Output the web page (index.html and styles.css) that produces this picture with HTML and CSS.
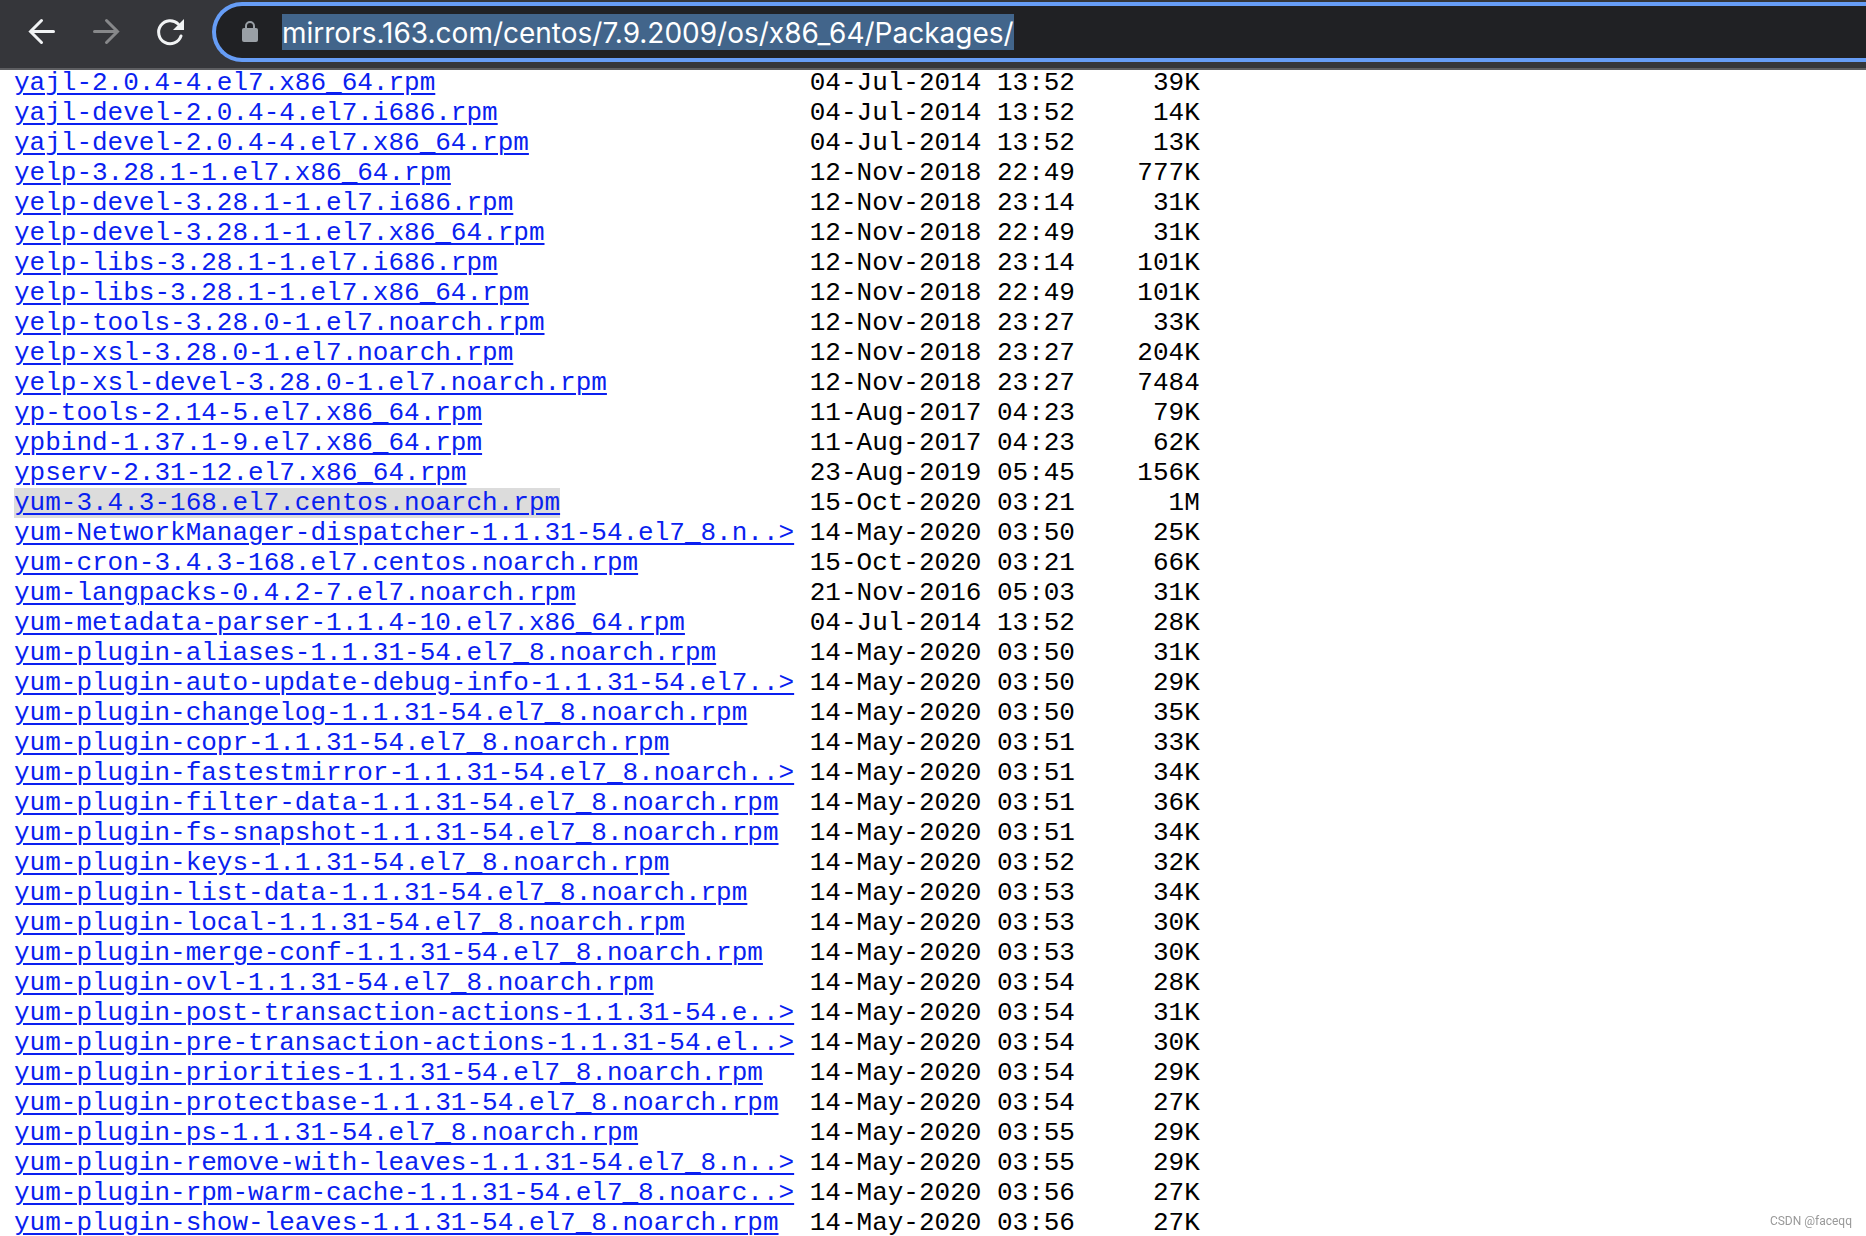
FILE: index.html
```html
<!DOCTYPE html>
<html lang="en">
<head>
<meta charset="utf-8">
<title>Index of /centos/7.9.2009/os/x86_64/Packages/</title>
<link rel="stylesheet" href="styles.css">
</head>
<body>
<header class="toolbar">
  <nav class="nav" aria-label="Browser navigation">
    <button class="nav-button" type="button" aria-label="Back">
      <svg class="icon" viewBox="0 0 32 32"><path d="M27.5 15.5H4.5M15.5 4.5L4.5 15.5L15.5 26.5"/></svg>
    </button>
    <button class="nav-button" type="button" aria-label="Forward" disabled>
      <svg class="icon" viewBox="0 0 32 32"><path d="M4.5 15.5H27.5M16.5 4.5L27.5 15.5L16.5 26.5"/></svg>
    </button>
    <button class="nav-button" type="button" aria-label="Reload">
      <svg class="icon" viewBox="0 0 32 32"><path class="arc" d="M27 20A11.5 11.5 0 1 1 24.2 8"/><path class="solid" d="M30 3V14H19Z"/></svg>
    </button>
  </nav>
  <div class="address">
    <svg class="lock" viewBox="0 0 16 22"><path class="shackle" d="M4 8V5a4 4 0 0 1 8 0V8"/><rect y="7" width="16" height="14" rx="2"/></svg>
    <input class="url" type="text" aria-label="Address" spellcheck="false" value="mirrors.163.com/centos/7.9.2009/os/x86_64/Packages/">
  </div>
</header>
<main class="page">
  <table class="listing" aria-label="Packages">
    <tbody>
      <tr><td><a href="#">yajl-2.0.4-4.el7.x86_64.rpm</a></td><td>04-Jul-2014 13:52</td><td>39K</td></tr>
      <tr><td><a href="#">yajl-devel-2.0.4-4.el7.i686.rpm</a></td><td>04-Jul-2014 13:52</td><td>14K</td></tr>
      <tr><td><a href="#">yajl-devel-2.0.4-4.el7.x86_64.rpm</a></td><td>04-Jul-2014 13:52</td><td>13K</td></tr>
      <tr><td><a href="#">yelp-3.28.1-1.el7.x86_64.rpm</a></td><td>12-Nov-2018 22:49</td><td>777K</td></tr>
      <tr><td><a href="#">yelp-devel-3.28.1-1.el7.i686.rpm</a></td><td>12-Nov-2018 23:14</td><td>31K</td></tr>
      <tr><td><a href="#">yelp-devel-3.28.1-1.el7.x86_64.rpm</a></td><td>12-Nov-2018 22:49</td><td>31K</td></tr>
      <tr><td><a href="#">yelp-libs-3.28.1-1.el7.i686.rpm</a></td><td>12-Nov-2018 23:14</td><td>101K</td></tr>
      <tr><td><a href="#">yelp-libs-3.28.1-1.el7.x86_64.rpm</a></td><td>12-Nov-2018 22:49</td><td>101K</td></tr>
      <tr><td><a href="#">yelp-tools-3.28.0-1.el7.noarch.rpm</a></td><td>12-Nov-2018 23:27</td><td>33K</td></tr>
      <tr><td><a href="#">yelp-xsl-3.28.0-1.el7.noarch.rpm</a></td><td>12-Nov-2018 23:27</td><td>204K</td></tr>
      <tr><td><a href="#">yelp-xsl-devel-3.28.0-1.el7.noarch.rpm</a></td><td>12-Nov-2018 23:27</td><td>7484</td></tr>
      <tr><td><a href="#">yp-tools-2.14-5.el7.x86_64.rpm</a></td><td>11-Aug-2017 04:23</td><td>79K</td></tr>
      <tr><td><a href="#">ypbind-1.37.1-9.el7.x86_64.rpm</a></td><td>11-Aug-2017 04:23</td><td>62K</td></tr>
      <tr><td><a href="#">ypserv-2.31-12.el7.x86_64.rpm</a></td><td>23-Aug-2019 05:45</td><td>156K</td></tr>
      <tr><td><a class="found" href="#">yum-3.4.3-168.el7.centos.noarch.rpm</a></td><td>15-Oct-2020 03:21</td><td>1M</td></tr>
      <tr><td><a href="#">yum-NetworkManager-dispatcher-1.1.31-54.el7_8.n..&gt;</a></td><td>14-May-2020 03:50</td><td>25K</td></tr>
      <tr><td><a href="#">yum-cron-3.4.3-168.el7.centos.noarch.rpm</a></td><td>15-Oct-2020 03:21</td><td>66K</td></tr>
      <tr><td><a href="#">yum-langpacks-0.4.2-7.el7.noarch.rpm</a></td><td>21-Nov-2016 05:03</td><td>31K</td></tr>
      <tr><td><a href="#">yum-metadata-parser-1.1.4-10.el7.x86_64.rpm</a></td><td>04-Jul-2014 13:52</td><td>28K</td></tr>
      <tr><td><a href="#">yum-plugin-aliases-1.1.31-54.el7_8.noarch.rpm</a></td><td>14-May-2020 03:50</td><td>31K</td></tr>
      <tr><td><a href="#">yum-plugin-auto-update-debug-info-1.1.31-54.el7..&gt;</a></td><td>14-May-2020 03:50</td><td>29K</td></tr>
      <tr><td><a href="#">yum-plugin-changelog-1.1.31-54.el7_8.noarch.rpm</a></td><td>14-May-2020 03:50</td><td>35K</td></tr>
      <tr><td><a href="#">yum-plugin-copr-1.1.31-54.el7_8.noarch.rpm</a></td><td>14-May-2020 03:51</td><td>33K</td></tr>
      <tr><td><a href="#">yum-plugin-fastestmirror-1.1.31-54.el7_8.noarch..&gt;</a></td><td>14-May-2020 03:51</td><td>34K</td></tr>
      <tr><td><a href="#">yum-plugin-filter-data-1.1.31-54.el7_8.noarch.rpm</a></td><td>14-May-2020 03:51</td><td>36K</td></tr>
      <tr><td><a href="#">yum-plugin-fs-snapshot-1.1.31-54.el7_8.noarch.rpm</a></td><td>14-May-2020 03:51</td><td>34K</td></tr>
      <tr><td><a href="#">yum-plugin-keys-1.1.31-54.el7_8.noarch.rpm</a></td><td>14-May-2020 03:52</td><td>32K</td></tr>
      <tr><td><a href="#">yum-plugin-list-data-1.1.31-54.el7_8.noarch.rpm</a></td><td>14-May-2020 03:53</td><td>34K</td></tr>
      <tr><td><a href="#">yum-plugin-local-1.1.31-54.el7_8.noarch.rpm</a></td><td>14-May-2020 03:53</td><td>30K</td></tr>
      <tr><td><a href="#">yum-plugin-merge-conf-1.1.31-54.el7_8.noarch.rpm</a></td><td>14-May-2020 03:53</td><td>30K</td></tr>
      <tr><td><a href="#">yum-plugin-ovl-1.1.31-54.el7_8.noarch.rpm</a></td><td>14-May-2020 03:54</td><td>28K</td></tr>
      <tr><td><a href="#">yum-plugin-post-transaction-actions-1.1.31-54.e..&gt;</a></td><td>14-May-2020 03:54</td><td>31K</td></tr>
      <tr><td><a href="#">yum-plugin-pre-transaction-actions-1.1.31-54.el..&gt;</a></td><td>14-May-2020 03:54</td><td>30K</td></tr>
      <tr><td><a href="#">yum-plugin-priorities-1.1.31-54.el7_8.noarch.rpm</a></td><td>14-May-2020 03:54</td><td>29K</td></tr>
      <tr><td><a href="#">yum-plugin-protectbase-1.1.31-54.el7_8.noarch.rpm</a></td><td>14-May-2020 03:54</td><td>27K</td></tr>
      <tr><td><a href="#">yum-plugin-ps-1.1.31-54.el7_8.noarch.rpm</a></td><td>14-May-2020 03:55</td><td>29K</td></tr>
      <tr><td><a href="#">yum-plugin-remove-with-leaves-1.1.31-54.el7_8.n..&gt;</a></td><td>14-May-2020 03:55</td><td>29K</td></tr>
      <tr><td><a href="#">yum-plugin-rpm-warm-cache-1.1.31-54.el7_8.noarc..&gt;</a></td><td>14-May-2020 03:56</td><td>27K</td></tr>
      <tr><td><a href="#">yum-plugin-show-leaves-1.1.31-54.el7_8.noarch.rpm</a></td><td>14-May-2020 03:56</td><td>27K</td></tr>
    </tbody>
  </table>
</main>
<div class="watermark">CSDN @faceqq</div>
</body>
</html>
```

FILE: styles.css
```css
* {
  box-sizing: border-box;
}

body {
  margin: 0;
  background: #fff;
  color: #000;
}

/* Browser toolbar */
.toolbar {
  position: relative;
  z-index: 1;
  display: flex;
  gap: 10px;
  padding: 2px 0 6px 10px;
  background: #35363a;
  border-bottom: 2px solid #5d5e61;
}

.nav {
  display: flex;
}

.nav-button {
  display: flex;
  align-items: center;
  justify-content: center;
  width: 64px;
  height: 60px;
  padding: 0;
  border: 0;
  background: none;
  color: #f1f3f4;
}

.nav-button:disabled {
  color: #87888a;
}

.icon {
  width: 32px;
  height: 32px;
  fill: none;
  stroke: currentColor;
  stroke-width: 3;
  stroke-linecap: round;
}

.icon .solid {
  fill: currentColor;
  stroke: none;
}

.address {
  display: flex;
  flex: 1;
  align-items: center;
  gap: 24px;
  height: 60px;
  padding-left: 26px;
  border: 4px solid #669df6;
  border-right: 0;
  border-radius: 30px 0 0 30px;
  background: #202124;
}

.lock {
  width: 16px;
  height: 22px;
  fill: #9aa0a6;
}

.lock .shackle {
  fill: none;
  stroke: #9aa0a6;
  stroke-width: 2;
}

.url {
  field-sizing: content;
  height: 36px;
  padding: 2px 0 0;
  border: 0;
  background: #42658b;
  color: #fff;
  font: 28px/34px Inter, sans-serif;
  outline: 0;
}

/* Directory listing, scrolled slightly under the toolbar */
.page {
  margin-top: -4px;
  padding-left: 14px;
}

.listing {
  table-layout: fixed;
  width: 76ch;
  border-collapse: collapse;
  font: 26px/26px "Liberation Mono", "Courier New", monospace;
  white-space: nowrap;
}

.listing td {
  height: 30px;
  padding: 4px 0 0;
}

.listing td:nth-child(1) {
  width: 51ch;
}

.listing td:nth-child(2) {
  width: 17ch;
}

.listing td:nth-child(3) {
  width: 8ch;
  text-align: right;
}

.listing a {
  color: #0a1ff0;
  text-decoration-thickness: 2px;
  text-underline-offset: 3px;
}

.listing .found {
  background: #dcdcdc;
}

.watermark {
  position: fixed;
  right: 14px;
  bottom: 8px;
  color: #999;
  font: 12px/14px Roboto, sans-serif;
}
```
